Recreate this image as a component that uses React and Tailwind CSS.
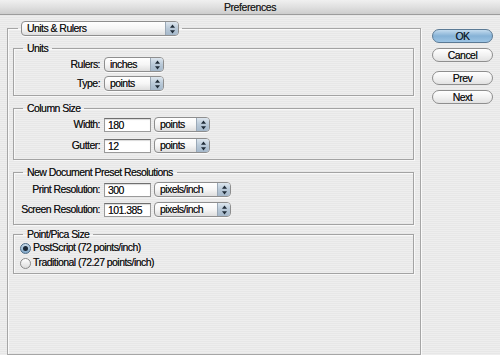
import React from "react";

const stripes =
  "bg-[image:repeating-linear-gradient(180deg,#eeeeee_0px,#eeeeee_1px,#e7e7e7_1px,#e7e7e7_2px)]";

function Arrows() {
  return (
    <svg width="7" height="10" viewBox="0 0 7 10">
      <path d="M3.5 0.5 L6 3.8 L1 3.8 Z" fill="#1e2a36" />
      <path d="M3.5 9.5 L6 6.2 L1 6.2 Z" fill="#1e2a36" />
    </svg>
  );
}

function Popup({ label, width }) {
  return (
    <div
      className={`${width} h-[15px] flex items-stretch rounded-[4px] border border-[#8e8e8e] bg-gradient-to-b from-white via-[#f6f6f6] to-[#dedede] shadow-[0_1px_0_rgba(255,255,255,0.8)] overflow-hidden`}
    >
      <div className="flex-1 pl-[5px] leading-[13px] whitespace-nowrap">{label}</div>
      <div className="w-[13px] flex items-center justify-center border-l border-[#9aa8b6] bg-gradient-to-b from-[#dde6ee] via-[#b9c9d8] to-[#a5b8ca]">
        <Arrows />
      </div>
    </div>
  );
}

function TextField({ value }) {
  return (
    <div className="w-[47px] h-[14px] bg-white border border-[#9a9a9a] border-t-[#6f6f6f] shadow-[inset_0_1px_1px_rgba(0,0,0,0.15)] pl-[3px] leading-[12px]">
      {value}
    </div>
  );
}

function Group({ title, className, children }) {
  return (
    <fieldset
      className={`w-[401px] border border-[#a3a3a3] shadow-[1px_1px_0_#f8f8f8,inset_1px_1px_0_#f8f8f8] pl-[9px] ${className}`}
    >
      <legend className="px-[4px] leading-[12px]">{title}</legend>
      {children}
    </fieldset>
  );
}

function Row({ label, children, className = "" }) {
  return (
    <div className={`flex items-center h-[15px] ${className}`}>
      <div className="w-[78px] flex justify-end whitespace-nowrap pr-[1px]">{label}</div>
      <div className="ml-[3px] flex items-center gap-[3px]">{children}</div>
    </div>
  );
}

function Radio({ checked, label, className = "" }) {
  return (
    <div className={`flex items-center h-[14px] -ml-[3px] ${className}`}>
      <div
        className={`w-[11px] h-[11px] rounded-full border flex items-center justify-center ${
          checked
            ? "border-[#4d6b86] bg-gradient-to-b from-[#c9dbea] to-[#7fa6c7]"
            : "border-[#8a8a8a] bg-gradient-to-b from-white to-[#dcdcdc]"
        }`}
      >
        {checked && <div className="w-[5px] h-[5px] rounded-full bg-[#1b2836]" />}
      </div>
      <span className="ml-[2px]">{label}</span>
    </div>
  );
}

function AquaButton({ label, primary, className = "" }) {
  return (
    <div
      className={`w-[61px] h-[14px] rounded-full border flex items-center justify-center leading-[12px] ${
        primary
          ? "border-[#5b7a95] bg-gradient-to-b from-[#c3dbee] via-[#86b2d6] to-[#9cc4e4] text-[#102030]"
          : "border-[#8e8e8e] bg-gradient-to-b from-white via-[#f2f2f2] to-[#e2e2e2]"
      } ${className}`}
    >
      {label}
    </div>
  );
}

export default function App() {
  return (
    <div
      className={`w-[500px] h-[355px] flex flex-col ${stripes} text-[10.5px] tracking-[-0.55px] text-[#141414] [text-shadow:0_0_0.5px_rgba(0,0,0,0.6)] font-['Liberation_Sans',Arial,sans-serif] overflow-hidden`}
    >
      {/* title bar */}
      <div className="h-[15px] shrink-0 border-b border-[#9c9c9c] bg-gradient-to-b from-[#f0f0f0] via-[#e0e0e0] to-[#cdcdcd] flex items-center justify-center text-[10.5px] tracking-[-0.4px] leading-[14px] text-[#222]">
        Preferences
      </div>

      <div className="flex pt-[6px]">
        {/* main panel */}
        <fieldset className="ml-[7px] w-[414px] h-[334px] border border-[#a6a6a6] shadow-[1px_1px_0_#fafafa,inset_1px_1px_0_#fafafa] px-[5px]">
          <legend className="ml-[5px] px-[3px]">
            <Popup label="Units & Rulers" width="w-[158px]" />
          </legend>

          <Group title="Units" className="mt-[6px] pb-[4px]">
            <Row label="Rulers:" className="mt-[3px]">
              <Popup label="inches" width="w-[60px]" />
            </Row>
            <Row label="Type:" className="mt-[4px]">
              <Popup label="points" width="w-[60px]" />
            </Row>
          </Group>

          <Group title="Column Size" className="mt-[6px] pb-[6px]">
            <Row label="Width:" className="mt-[3px]">
              <TextField value="180" />
              <Popup label="points" width="w-[56px]" />
            </Row>
            <Row label="Gutter:" className="mt-[6px]">
              <TextField value="12" />
              <Popup label="points" width="w-[56px]" />
            </Row>
          </Group>

          <Group title="New Document Preset Resolutions" className="mt-[6px] pb-[7px]">
            <Row label="Print Resolution:" className="mt-[4px]">
              <TextField value="300" />
              <Popup label="pixels/inch" width="w-[77px]" />
            </Row>
            <Row label="Screen Resolution:" className="mt-[5px]">
              <TextField value="101.385" />
              <Popup label="pixels/inch" width="w-[77px]" />
            </Row>
          </Group>

          <Group title="Point/Pica Size" className="mt-[3px] pb-[3px]">
            <Radio checked label="PostScript (72 points/inch)" className="mt-[1px]" />
            <Radio label="Traditional (72.27 points/inch)" className="mt-[1px]" />
          </Group>
        </fieldset>

        {/* buttons */}
        <div className="ml-[11px] pt-[8px] flex flex-col">
          <AquaButton label="OK" primary />
          <AquaButton label="Cancel" className="mt-[5px]" />
          <AquaButton label="Prev" className="mt-[9px]" />
          <AquaButton label="Next" className="mt-[5px]" />
        </div>
      </div>
    </div>
  );
}
